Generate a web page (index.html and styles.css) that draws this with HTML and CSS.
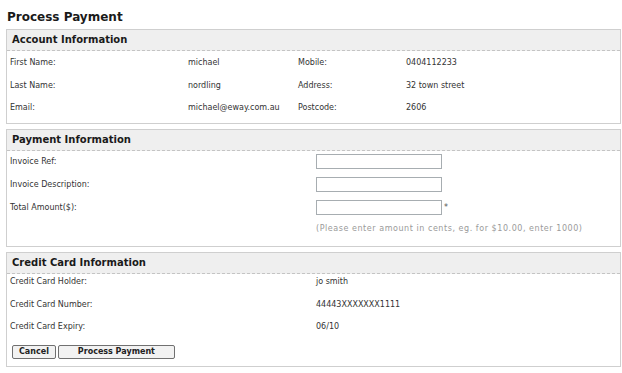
FILE: index.html
```html
<!DOCTYPE html>
<html>
<head>
<meta charset="utf-8">
<link rel="stylesheet" href="styles.css">
</head>
<body>
<div class="page">
  <h1 class="title">Process Payment</h1>

  <section class="box">
    <h2 class="box-head">Account Information</h2>
    <div class="account">
      <span>First Name:</span><span>michael</span><span>Mobile:</span><span>0404112233</span>
      <span>Last Name:</span><span>nordling</span><span>Address:</span><span>32 town street</span>
      <span>Email:</span><span>michael@eway.com.au</span><span>Postcode:</span><span>2606</span>
    </div>
  </section>

  <section class="box">
    <h2 class="box-head">Payment Information</h2>
    <div class="payment">
      <span class="plabel">Invoice Ref:</span><span class="pfield"><input class="inp" type="text"></span>
      <span class="plabel">Invoice Description:</span><span class="pfield"><input class="inp" type="text"></span>
      <span class="plabel">Total Amount($):</span><span class="pfield"><input class="inp" type="text"><span class="req">*</span></span>
      <span></span><span class="hint">(Please enter amount in cents, eg. for $10.00, enter 1000)</span>
    </div>
  </section>

  <section class="box">
    <h2 class="box-head">Credit Card Information</h2>
    <div class="card">
      <span>Credit Card Holder:</span><span>jo smith</span>
      <span>Credit Card Number:</span><span>44443XXXXXXX1111</span>
      <span>Credit Card Expiry:</span><span>06/10</span>
    </div>
    <div class="actions">
      <button class="btn" type="button">Cancel</button>
      <button class="btn btn-wide" type="button">Process Payment</button>
    </div>
  </section>
</div>
</body>
</html>
```

FILE: styles.css
```css
html, body {
  margin: 0;
  padding: 0;
  background: #ffffff;
}
body {
  font-family: "DejaVu Sans", Verdana, sans-serif;
  font-size: 8px;
  color: #333333;
}
.page {
  width: 615px;
  margin-left: 6px;
  padding-top: 10px;
}
.title {
  margin: 0 0 5px 1px;
  font-size: 12px;
  line-height: 14px;
  font-weight: bold;
  color: #1a1a1a;
}
.box {
  border: 1px solid #cfcfcf;
  margin-bottom: 5px;
}
.box-head {
  margin: 0;
  height: 20px;
  line-height: 20px;
  padding-left: 5px;
  font-size: 10px;
  font-weight: bold;
  color: #1a1a1a;
  background: #efefef;
  border-bottom: 1px dashed #c4c4c4;
}
.account {
  display: grid;
  grid-template-columns: 178px 110px 108px 1fr;
  row-gap: 8.5px;
  padding: 5px 0 8px 3px;
  line-height: 14px;
}
.payment {
  display: grid;
  grid-template-columns: 306px 1fr;
  row-gap: 8px;
  padding: 3px 0 10px 3px;
  line-height: 15px;
}
.payment .hint {
  margin-top: -1px;
  line-height: 14px;
  color: #9a9a9a;
  letter-spacing: 0.55px;
}
.plabel {
  line-height: 15px;
}
.pfield {
  display: flex;
  align-items: center;
}
.inp {
  box-sizing: border-box;
  width: 126px;
  height: 15px;
  margin: 0;
  padding: 0 2px;
  border: 1px solid #a7adb1;
  background: #ffffff;
  font: inherit;
}
.req {
  margin-left: 2px;
  color: #555555;
  font-size: 8px;
  line-height: 8px;
}
.card {
  display: grid;
  grid-template-columns: 306px 1fr;
  row-gap: 8.5px;
  padding: 1px 0 0 3px;
  line-height: 14px;
}
.actions {
  display: flex;
  gap: 2px;
  padding: 11px 0 7px 5px;
}
.btn {
  box-sizing: border-box;
  height: 14px;
  margin: 0;
  padding: 0 6px;
  border: 1px solid #707070;
  border-radius: 2px;
  background: #f2f2f2;
  font-family: "DejaVu Sans", Verdana, sans-serif;
  font-size: 8px;
  font-weight: bold;
  line-height: 12px;
  color: #222222;
}
.btn-wide {
  width: 117px;
}
```
